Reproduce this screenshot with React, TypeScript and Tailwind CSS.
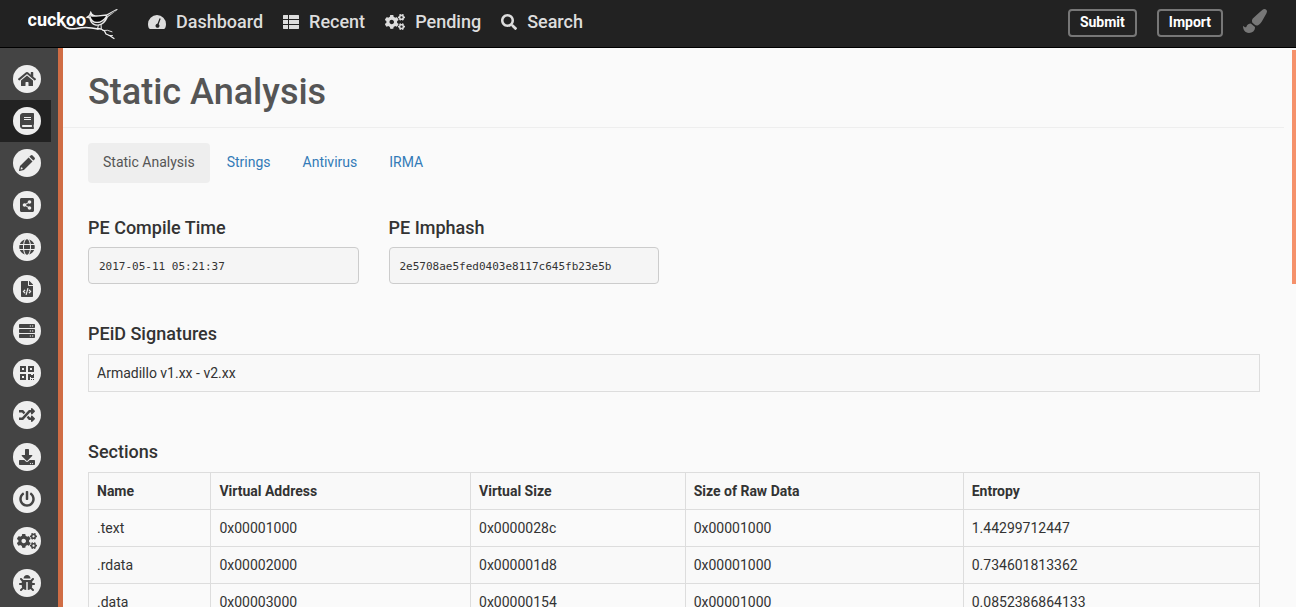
import type { ComponentType } from "react";
import {
  FaBook,
  FaBug,
  FaCogs,
  FaDownload,
  FaFileCode,
  FaGlobe,
  FaHome,
  FaPaintBrush,
  FaPowerOff,
  FaQrcode,
  FaRandom,
  FaSearch,
  FaShareAltSquare,
} from "react-icons/fa";

type IconProps = { className?: string };

function GaugeIcon({ className }: IconProps) {
  return (
    <svg className={className} viewBox="0 0 18 16" fill="currentColor" aria-hidden="true">
      <path
        fillRule="evenodd"
        d="M9 1a9 9 0 0 1 9 9c0 1.800-.4 3.400-1.200 4.600-.2.300-.5.400-.9.400H2.100c-.4 0-.7-.1-.9-.4C.4 13.400 0 11.800 0 10a9 9 0 0 1 9-9zM11.600 4.300l-2.200 5.500a2 2 0 1 0 1.300.4l2-5.500z"
      />
    </svg>
  );
}

function ListIcon({ className }: IconProps) {
  return (
    <svg className={className} viewBox="0 0 16 16" fill="currentColor" aria-hidden="true">
      <path d="M.5 1H5v4H0V1.500zM6 1h9.500l.5.5V5H6zM0 6h5v4H0zM6 6h10v4H6zM0 11h5v4H.5l-.5-.5zM6 11h10v3.500l-.5.5H6z" />
    </svg>
  );
}

function PencilIcon({ className }: IconProps) {
  return (
    <svg className={className} viewBox="0 0 16 16" fill="currentColor" aria-hidden="true">
      <path
        fillRule="evenodd"
        d="M9.600 2.500l3.900 3.900-8.600 8.600-4.200 1q-.8.100-.7-.7l1-4.200zM2 12.300l-.4 2.100 2.100-.4-.3-1.200z"
      />
      <path d="M10.400 1.700L11.600.5q1-.9 2 0l1.900 1.900q.9 1 0 2L14.300 5.600z" />
    </svg>
  );
}

function ServerIcon({ className }: IconProps) {
  return (
    <svg className={className} viewBox="0 0 16 16" fill="currentColor" aria-hidden="true">
      {[1, 6, 11].map((y) => (
        <g key={y}>
          <rect x="0" y={y} width="16" height="4" rx="0.800" />
          <path fill="#eee" d={`M10.800 ${y + 1.400}h1.200v1.200h-1.200zM13 ${y + 1.400}h1.200v1.200H13z`} />
        </g>
      ))}
    </svg>
  );
}

function Logo() {
  return (
    <svg className="h-10 w-[92px]" viewBox="0 0 92 40" role="img" aria-label="cuckoo">
      <text x="-0.5" y="22" fill="#fff" fontSize="18" fontWeight="700" fontFamily="Roboto, sans-serif">
        cuckoo
      </text>
      <g fill="none" stroke="#f2f2f2" strokeLinecap="round" strokeLinejoin="round">
        <path strokeWidth="1.5" d="M35 20.500C38 25 44 25.500 50 24.200S62 23 70 25" />
        <path strokeWidth="1.3" d="M69 24.500l4 .5 3.500 2 1.500 3 3.500 1.500 4.500 3" />
        <path strokeWidth="0.900" d="M75 26.500l4.500-.2 4.500 1.500M81 31.500l3.500 0" />
        <path strokeWidth="1" d="M70.500 20.500l-.8 4M73 20l.3 4.500" />
      </g>
      <path fill="#e8e8e8" d="M57.500 13.500l3.500-2.400 1.700-4.300 1.600 3c2 1.400 3.500 1.700 6 1.400l8.500-1L88 5.300q2-.9 1.500.4L80 13c-2 4.800-5.500 8.800-10.500 8.800-4.500 0-7.500-2.800-8.200-7.300z" />
      <path fill="#0a0a0a" d="M62.500 12.300c4 1.500 9-.6 15.500-.3-2.500 3.800-5.500 5.800-9 5.800-3.500 0-5.500-2-6.500-5.500z" />
      <path fill="#222" d="M63.500 17.200c3.500 3 10 2.500 13.500-2-1.500 3-4 5.200-7.500 5.200-2.800 0-4.800-1.200-6-3.200z" />
      <path fill="none" stroke="#333" strokeWidth="0.700" d="M79 12l8.500-5.200M61.500 12.300l1-.6" />
    </svg>
  );
}

const navItems: { label: string; icon: ComponentType<IconProps>; size: string }[] = [
  { label: "Dashboard", icon: GaugeIcon, size: "h-4 w-[18px]" },
  { label: "Recent", icon: ListIcon, size: "size-4" },
  { label: "Pending", icon: FaCogs, size: "h-4 w-5" },
  { label: "Search", icon: FaSearch, size: "size-4" },
];

const sideItems: { label: string; icon: ComponentType<IconProps>; size: string; active?: boolean }[] = [
  { label: "Summary", icon: FaHome, size: "h-4 w-[18px]" },
  { label: "Static Analysis", icon: FaBook, size: "size-4", active: true },
  { label: "Extracted Artifacts", icon: PencilIcon, size: "size-4" },
  { label: "Behavioral Analysis", icon: FaShareAltSquare, size: "size-4" },
  { label: "Network Analysis", icon: FaGlobe, size: "size-4" },
  { label: "Dropped Files", icon: FaFileCode, size: "size-4" },
  { label: "Dropped Buffers", icon: ServerIcon, size: "size-4" },
  { label: "Process Memory", icon: FaQrcode, size: "size-4" },
  { label: "Compare Analysis", icon: FaRandom, size: "size-4" },
  { label: "Export Analysis", icon: FaDownload, size: "size-4" },
  { label: "Reboot Analysis", icon: FaPowerOff, size: "size-4" },
  { label: "Options", icon: FaCogs, size: "h-4 w-5" },
  { label: "Feedback", icon: FaBug, size: "size-4" },
];

const tabs = ["Static Analysis", "Strings", "Antivirus", "IRMA"];

const columns = ["Name", "Virtual Address", "Virtual Size", "Size of Raw Data", "Entropy"];

const sections = [
  [".text", "0x00001000", "0x0000028c", "0x00001000", "1.44299712447"],
  [".rdata", "0x00002000", "0x000001d8", "0x00001000", "0.734601813362"],
  [".data", "0x00003000", "0x00000154", "0x00001000", "0.0852386864133"],
];

function Field({ title, value }: { title: string; value: string }) {
  return (
    <section>
      <h2 className="mb-[9px] text-lg leading-5 font-medium">{title}</h2>
      <pre className="rounded border border-[#ccc] bg-[#f5f5f5] px-2.5 pt-[9px] pb-[7px] font-['DejaVu_Sans_Mono',monospace] text-[11px] leading-[19px]">
        {value}
      </pre>
    </section>
  );
}

export default function App() {
  return (
    <div className="flex h-screen flex-col overflow-hidden bg-[#fafafa] font-[Roboto,sans-serif] text-sm leading-5 text-[#333]">
      <header className="flex h-12 shrink-0 items-center border-b border-black bg-[#222] pr-[29px] pl-7">
        <a href="#home" className="mr-7">
          <Logo />
        </a>
        <nav className="flex items-center gap-5 pb-1">
          {navItems.map(({ label, icon: Icon, size }) => (
            <a key={label} href={`#${label.toLowerCase()}`} className="flex items-center gap-2.5 text-lg leading-6 font-medium text-[#ddd]">
              <Icon className={size} />
              {label}
            </a>
          ))}
        </nav>
        <div className="ml-auto flex items-center gap-5 pb-0.5">
          <button className="h-7 rounded border-2 border-[#777] px-2.5 pb-px text-sm leading-5 font-bold text-white">Submit</button>
          <button className="h-7 rounded border-2 border-[#777] px-2.5 pb-px text-sm leading-5 font-bold text-white">Import</button>
          <button aria-label="Theme" className="pb-1 text-[#777]">
            <FaPaintBrush className="size-6" />
          </button>
        </div>
      </header>

      <div className="flex min-h-0 flex-1">
        <aside className="w-[63px] shrink-0 overflow-hidden border-r-5 border-[#d06d45] bg-[#444] pt-2.5">
          {sideItems.map(({ label, icon: Icon, size, active }) => (
            <a
              key={label}
              href="#analysis"
              aria-label={label}
              className={`mr-[7px] flex h-[42px] items-center pl-[13px] ${active ? "bg-[#222]" : ""}`}
            >
              <span className="flex size-7 items-center justify-center rounded-full bg-[#eee] text-[#444]">
                <Icon className={size} />
              </span>
            </a>
          ))}
        </aside>

        <main className="relative min-w-0 flex-1 overflow-hidden">
          <div className="absolute top-0.5 right-0 h-[234px] w-1 bg-[#f5916b]" />
          <header className="mr-3 border-b border-[#eee] pt-[26px] pb-[17px] pl-[25px]">
            <h1 className="text-4xl leading-9 font-medium text-[#555]">Static Analysis</h1>
          </header>
          <div className="pt-[15px] pr-9 pl-[25px]">
            <nav className="flex gap-0.5">
              {tabs.map((tab, i) => (
                <a
                  key={tab}
                  href="#tab"
                  className={`rounded px-[15px] pt-[9px] pb-[11px] ${i === 0 ? "bg-[#eee] text-[#555]" : "text-[#337ab7]"}`}
                >
                  {tab}
                </a>
              ))}
            </nav>

            <div className="mt-[35px] grid grid-cols-4 gap-[30px]">
              <Field title="PE Compile Time" value="2017-05-11 05:21:37" />
              <Field title="PE Imphash" value="2e5708ae5fed0403e8117c645fb23e5b" />
            </div>

            <section className="mt-10">
              <h2 className="mb-2.5 text-lg leading-5 font-medium">PEiD Signatures</h2>
              <table className="w-full border-collapse">
                <tbody>
                  <tr className="bg-[#f9f9f9]">
                    <td className="border border-[#ddd] p-2">Armadillo v1.xx - v2.xx</td>
                  </tr>
                </tbody>
              </table>
            </section>

            <section className="mt-[50px]">
              <h2 className="mb-2.5 text-lg leading-5 font-medium">Sections</h2>
              <table className="w-full border-collapse">
                <thead>
                  <tr className="bg-[#f9f9f9]">
                    {columns.map((column) => (
                      <th key={column} className="border border-[#ddd] p-2 text-left font-bold">
                        {column}
                      </th>
                    ))}
                  </tr>
                </thead>
                <tbody>
                  {sections.map((row) => (
                    <tr key={row[0]} className="even:bg-[#f9f9f9]">
                      {row.map((cell, i) => (
                        <td key={i} className="border border-[#ddd] p-2">
                          {cell}
                        </td>
                      ))}
                    </tr>
                  ))}
                </tbody>
              </table>
            </section>
          </div>
        </main>
      </div>
    </div>
  );
}
